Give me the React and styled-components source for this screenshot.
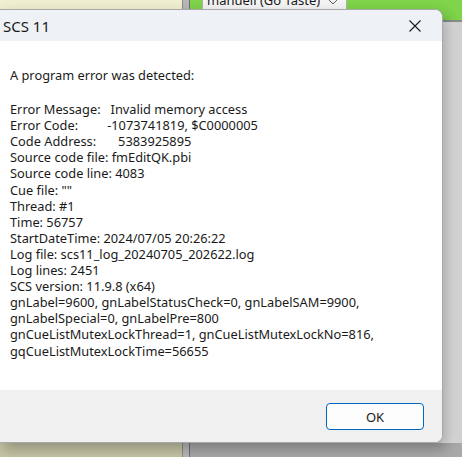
import React from 'react';
import styled, { createGlobalStyle } from 'styled-components';

const GlobalStyle = createGlobalStyle`
  html, body {
    margin: 0;
    padding: 0;
  }
  body {
    font-family: 'Noto Sans', 'Open Sans', sans-serif;
  }
`;

const lines = [
  { label: 'Error Message:', gap: 10, value: 'Invalid memory access' },
  { label: 'Error Code:', gap: 29, value: '-1073741819, $C0000005' },
  { label: 'Code Address:', gap: 22, value: '5383925895' },
  { label: 'Source code file: fmEditQK.pbi' },
  { label: 'Source code line: 4083' },
  { label: 'Cue file: ""' },
  { label: 'Thread: #1' },
  { label: 'Time: 56757' },
  { label: 'StartDateTime: 2024/07/05 20:26:22' },
  { label: 'Log file: scs11_log_20240705_202622.log' },
  { label: 'Log lines: 2451' },
  { label: 'SCS version: 11.9.8 (x64)' },
  { label: 'gnLabel=9600, gnLabelStatusCheck=0, gnLabelSAM=9900,' },
  { label: 'gnLabelSpecial=0, gnLabelPre=800' },
  { label: 'gnCueListMutexLockThread=1, gnCueListMutexLockNo=816,' },
  { label: 'gqCueListMutexLockTime=56655' },
];

function App() {
  return (
    <Desktop>
      <GlobalStyle />
      <Backdrop>
        <LeftPane />
        <Splitter />
        <RightPane>
          <GreenBar>
            <Combo>
              <span>manuell (Go Taste)</span>
              <Chevron viewBox="0 0 10 6">
                <path d="M1 1 L5 5 L9 1" fill="none" stroke="#606060" strokeWidth="1" />
              </Chevron>
            </Combo>
          </GreenBar>
          <GrayArea />
        </RightPane>
      </Backdrop>

      <Dialog>
        <TitleBar>
          <Title>SCS 11</Title>
          <CloseButton aria-label="Close">
            <svg width="12" height="12" viewBox="0 0 12 12">
              <path d="M0.5 0.5 L11.5 11.5 M11.5 0.5 L0.5 11.5" stroke="#1a1a1a" strokeWidth="1.1" />
            </svg>
          </CloseButton>
        </TitleBar>
        <Body>
          <Heading>A program error was detected:</Heading>
          <Details>
            {lines.map((l, i) => (
              <Line key={i}>
                {l.label}
                {l.value && <Value gap={l.gap}>{l.value}</Value>}
              </Line>
            ))}
          </Details>
        </Body>
        <Footer>
          <OkButton>OK</OkButton>
        </Footer>
      </Dialog>
    </Desktop>
  );
}

const Desktop = styled.div`
  position: relative;
  width: 462px;
  height: 457px;
  overflow: hidden;
`;

const Backdrop = styled.div`
  display: flex;
  height: 100%;
`;

const LeftPane = styled.div`
  width: 182px;
  background: linear-gradient(180deg, #f1efd2 0%, #d9d9bd 60%, #c4c5a5 100%);
`;

const Splitter = styled.div`
  width: 8px;
  background: #b8b8b8;
  border-left: 1px solid #8a8a8a;
  border-right: 1px solid #6e6e6e;
  box-sizing: border-box;
`;

const RightPane = styled.div`
  flex: 1;
  display: flex;
  flex-direction: column;
`;

const GreenBar = styled.div`
  height: 20px;
  background: #7ed44a;
  border-bottom: 2px solid #8c8c8c;
  padding-left: 12px;
  display: flex;
  align-items: flex-end;
`;

const Combo = styled.div`
  width: 145px;
  height: 28px;
  margin-bottom: -2px;
  box-sizing: border-box;
  background: #f4f4f4;
  border: 1px solid #b0b0b0;
  display: flex;
  align-items: flex-start;
  justify-content: space-between;
  padding: 0 8px 0 4px;
  font-family: 'Noto Sans', sans-serif;
  font-size: 13px;
  line-height: 16px;
  color: #1a1a1a;
  span {
    margin-top: -3px;
  }
`;

const Chevron = styled.svg`
  width: 10px;
  height: 6px;
  margin-top: 4px;
`;

const GrayArea = styled.div`
  flex: 1;
  background: linear-gradient(90deg, #d0d0d0 0%, #d6d6d6 90%, #e4e4e4 93%, #cfcfcf 100%);
  background-color: #d5d5d5;
  position: relative;
  &::after {
    content: '';
    position: absolute;
    left: 0;
    right: 0;
    bottom: 0;
    height: 14px;
    background: #a9a9a9;
  }
`;

const Dialog = styled.div`
  position: absolute;
  left: -1px;
  top: 9px;
  width: 444px;
  height: 434px;
  display: flex;
  flex-direction: column;
  background: #ffffff;
  border: 1px solid #a8a8a8;
  border-left: none;
  border-radius: 0 8px 8px 0;
  box-sizing: border-box;
  overflow: hidden;
  box-shadow: 4px 6px 14px rgba(0, 0, 0, 0.28);
`;

const TitleBar = styled.div`
  height: 31px;
  flex-shrink: 0;
  background: #eef2f6;
  display: flex;
  align-items: center;
  justify-content: space-between;
  padding-left: 4px;
`;

const Title = styled.div`
  font-family: 'Noto Sans', sans-serif;
  font-size: 15px;
  color: #1a1a1a;
  margin-top: 1px;
`;

const CloseButton = styled.div`
  width: 44px;
  height: 31px;
  display: flex;
  align-items: center;
  justify-content: center;
  margin-right: 5px;
`;

const Body = styled.div`
  flex: 1;
  padding: 26px 0 0 11px;
  color: #1a1a1a;
  font-family: 'Noto Sans', sans-serif;
  font-size: 12.8px;
  line-height: 16.1px;
`;

const Heading = styled.div`
  margin-bottom: 18px;
`;

const Details = styled.div`
  display: flex;
  flex-direction: column;
`;

const Line = styled.div`
  white-space: nowrap;
`;

const Value = styled.span`
  margin-left: ${(p) => p.gap}px;
`;

const Footer = styled.div`
  height: 52px;
  flex-shrink: 0;
  background: #f0f0f0;
  display: flex;
  align-items: center;
  justify-content: flex-end;
  padding-right: 18px;
`;

const OkButton = styled.button`
  width: 98px;
  height: 27px;
  margin-top: 1px;
  background: #fdfdfd;
  border: 1px solid #0067c0;
  border-radius: 4px;
  box-shadow: inset 0 0 0 1px #ffffff;
  font-family: 'Noto Sans', sans-serif;
  font-size: 13px;
  color: #1a1a1a;
  padding: 0;
`;

export default App;
